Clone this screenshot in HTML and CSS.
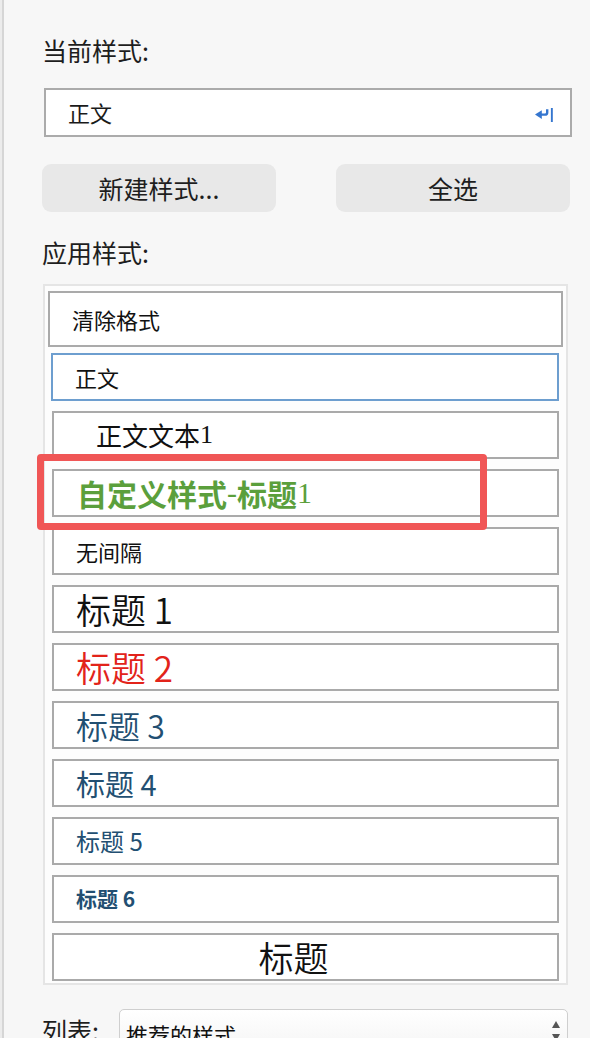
FILE: index.html
```html
<!DOCTYPE html>
<html lang="zh-CN">
<head>
<meta charset="utf-8">
<title>样式</title>
<link rel="stylesheet" href="styles.css">
</head>
<body>
<div class="pane">
  <div class="label">当前样式:</div>
  <div class="current">
    <span class="current-text">正文</span>
    <svg class="return-icon" width="18" height="15" viewBox="0 0 18 15" aria-hidden="true">
      <polygon points="0,6.6 6.8,2.2 6.8,11" fill="#3576cf"/>
      <path d="M6 6.6 H10 Q12.2 6.6 12.2 4.4 V1.2" fill="none" stroke="#3576cf" stroke-width="2.4"/>
      <rect x="15.9" y="0" width="1.9" height="14" fill="#3576cf"/>
    </svg>
  </div>
  <div class="buttons">
    <div class="btn">新建样式...</div>
    <div class="btn">全选</div>
  </div>
  <div class="label label-apply">应用样式:</div>
  <div class="style-list">
    <div class="item item-clear">清除格式</div>
    <div class="item item-selected">正文</div>
    <div class="item item-body1">正文文本<span class="serif">1</span></div>
    <div class="item item-custom">自定义样式<span class="serif">-</span>标题<span class="serif">1</span><span class="highlight"></span></div>
    <div class="item item-nospace">无间隔</div>
    <div class="item h1">标题 1</div>
    <div class="item h2">标题 2</div>
    <div class="item h3">标题 3</div>
    <div class="item h4">标题 4</div>
    <div class="item h5">标题 5</div>
    <div class="item h6">标题 6</div>
    <div class="item item-title">标题</div>
  </div>
  <div class="list-row">
    <div class="list-label">列表:</div>
    <div class="select">
      <span class="select-text">推荐的样式</span>
      <span class="spin"><i class="arrow-up"></i><i class="arrow-down"></i></span>
    </div>
  </div>
</div>
</body>
</html>
```

FILE: styles.css
```css
html {
  background: #ececec;
}

body {
  margin: 0 0 0 2px;
  border-left: 2px solid #d6d6d6;
  background: #f7f7f7;
  min-height: 1038px;
  overflow: hidden;
  font-family: "Noto Sans CJK SC", "Noto Sans", sans-serif;
  color: #1a1a1a;
}

.pane {
  padding: 35px 0 0 38px;
  width: 528px;
}

.label {
  font-size: 25px;
  line-height: 30px;
  color: #1e1e1e;
}

.current {
  margin: 23px -2px 0 2px;
  height: 49px;
  box-sizing: border-box;
  border: 2px solid #ababab;
  background: #fff;
  display: flex;
  align-items: center;
  padding: 0 17px 2px 22px;
}

.current-text {
  font-size: 22px;
  line-height: 1;
}

.return-icon {
  margin-left: auto;
  margin-top: 8px;
}

.buttons {
  margin-top: 27px;
  display: grid;
  grid-template-columns: 1fr 1fr;
  column-gap: 60px;
}

.btn {
  height: 48px;
  border-radius: 9px;
  background: #e8e8e8;
  font-size: 25px;
  line-height: 1;
  display: flex;
  align-items: center;
  justify-content: center;
  color: #1e1e1e;
}

.label-apply {
  margin-top: 25px;
}

.style-list {
  margin: 17px 0 0 1px;
  width: 525px;
  box-sizing: border-box;
  border: 2px solid #e5e5e5;
  background: #fdfdfd;
  padding: 5px 3px 2px;
  position: relative;
}

.item {
  box-sizing: border-box;
  height: 48px;
  border: 2px solid #aaaaaa;
  background: #fff;
  margin: 10px 4px 0;
  display: flex;
  align-items: center;
  padding-left: 22px;
  font-size: 22px;
  line-height: 1.2;
  white-space: nowrap;
  position: relative;
  color: #111;
}

.item-clear {
  margin: 0;
  height: 56px;
}

.item-selected {
  margin: 6px 4px 0 3px;
  border-color: #6d9ecf;
}

.item-body1 {
  padding-left: 42px;
  font-size: 26px;
}

.serif {
  font-family: "Liberation Serif", "Noto Sans CJK SC", serif;
  font-weight: normal;
}

.item-custom {
  padding-left: 23px;
  font-size: 30px;
  font-weight: bold;
  color: #5b9f3c;
}

.highlight {
  position: absolute;
  left: -17px;
  top: -17px;
  width: 450px;
  height: 76px;
  box-sizing: border-box;
  border: 7px solid #f05656;
  border-radius: 4px;
  z-index: 2;
  pointer-events: none;
}

.h1,
.h2,
.h3,
.item-title {
  font-weight: 350;
}

.h1 {
  font-size: 35px;
}

.h2 {
  font-size: 35px;
  color: #e2231a;
}

.h3 {
  font-size: 32px;
  color: #224f72;
}

.h4 {
  font-size: 29px;
  color: #224f72;
}

.h5 {
  font-size: 24px;
  color: #224f72;
}

.h6 {
  font-size: 21px;
  font-weight: bold;
  color: #224f72;
}

.item-title {
  font-size: 35px;
  justify-content: center;
  padding-right: 46px;
}

.list-row {
  margin-top: 24px;
  display: flex;
  align-items: flex-start;
}

.list-label {
  width: 77px;
  flex: none;
  font-size: 25px;
  line-height: 30px;
  margin-top: 6px;
  color: #1e1e1e;
}

.select {
  width: 449px;
  height: 50px;
  box-sizing: border-box;
  border: 1px solid #cfcfcf;
  border-radius: 5px;
  background: linear-gradient(#ffffff, #f3f3f3);
  display: flex;
  align-items: center;
  padding-left: 6px;
}

.select-text {
  font-size: 22px;
  line-height: 1;
  color: #111;
}

.spin {
  margin-left: auto;
  margin-right: 7px;
  margin-bottom: 6px;
  display: flex;
  flex-direction: column;
  gap: 6px;
}

.arrow-up {
  width: 0;
  height: 0;
  border-left: 4.5px solid transparent;
  border-right: 4.5px solid transparent;
  border-bottom: 7px solid #555;
}

.arrow-down {
  width: 0;
  height: 0;
  border-left: 4.5px solid transparent;
  border-right: 4.5px solid transparent;
  border-top: 7px solid #555;
}
```
